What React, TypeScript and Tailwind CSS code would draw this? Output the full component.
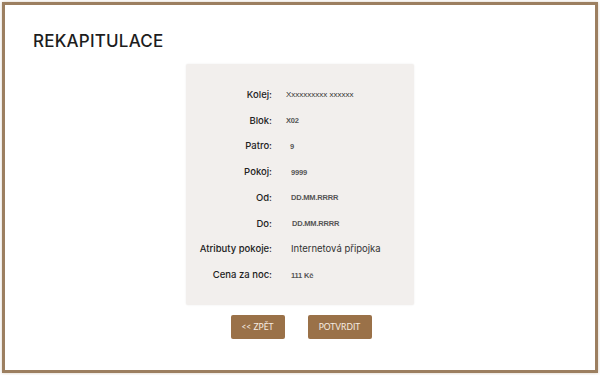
const rows: { label: string; value: string; kind: "arial" | "bold" | "sans"; shift?: string }[] = [
  { label: "Kolej:", value: "Xxxxxxxxxx xxxxxx", kind: "arial" },
  { label: "Blok:", value: "X02", kind: "bold" },
  { label: "Patro:", value: "9", kind: "bold", shift: "pl-[4px]" },
  { label: "Pokoj:", value: "9999", kind: "bold", shift: "pl-[5px]" },
  { label: "Od:", value: "DD.MM.RRRR", kind: "bold", shift: "pl-[5px]" },
  { label: "Do:", value: "DD.MM.RRRR", kind: "bold", shift: "pl-[6px]" },
  { label: "Atributy pokoje:", value: "Internetová připojka", kind: "sans", shift: "pl-[5px]" },
  { label: "Cena za noc:", value: "111 Kč", kind: "bold", shift: "pl-[5px]" },
];

const valueClass = {
  arial: "font-['Liberation_Sans',Arial,sans-serif] text-[8px] text-[#333]",
  bold: "font-['Liberation_Sans',Arial,sans-serif] text-[7.5px] font-bold tracking-[-0.2px] text-[#555]",
  sans: "font-['Inter',sans-serif] text-[9.5px] text-[#333]",
};

export default function App() {
  return (
    <div className="h-[375px] w-[600px] bg-white p-[2px]">
      <div className="flex h-full flex-col border-[3px] border-[#9c7f60] bg-white shadow-[0_0_3px_rgba(156,127,96,0.4)]">
        <h1 className="pl-[28px] pt-[25px] font-['Inter',sans-serif] text-[17px] font-medium leading-[22px] tracking-[0.2px] text-[#1d1d1d]">
          REKAPITULACE
        </h1>

        <div className="mx-auto mt-[12px] w-[228px] rounded-[2px] bg-[#f2efed] pb-[17px] pl-[12px] pt-[18px] shadow-[0_0_2px_rgba(0,0,0,0.08)]">
          {rows.map((r) => (
            <div key={r.label} className="flex h-[25.75px] items-center">
              <div className="w-[74px] whitespace-nowrap text-right font-['Inter',sans-serif] text-[9.5px] font-medium text-[#222]">
                {r.label}
              </div>
              <div className={`ml-[14px] ${r.shift ?? ""} ${valueClass[r.kind]}`}>{r.value}</div>
            </div>
          ))}
        </div>

        <div className="mt-[10px] flex justify-center gap-[23px] pl-[2px]">
          <button className="flex h-[24px] w-[54px] items-center justify-center rounded-[2px] bg-[#9a7148] font-['Lato',sans-serif] text-[8.5px] text-[#f6ece2]">
            &lt;&lt; ZPĚT
          </button>
          <button className="flex h-[24px] w-[64px] items-center justify-center rounded-[2px] bg-[#9a7148] font-['Lato',sans-serif] text-[8.5px] text-[#f6ece2]">
            POTVRDIT
          </button>
        </div>
      </div>
    </div>
  );
}
